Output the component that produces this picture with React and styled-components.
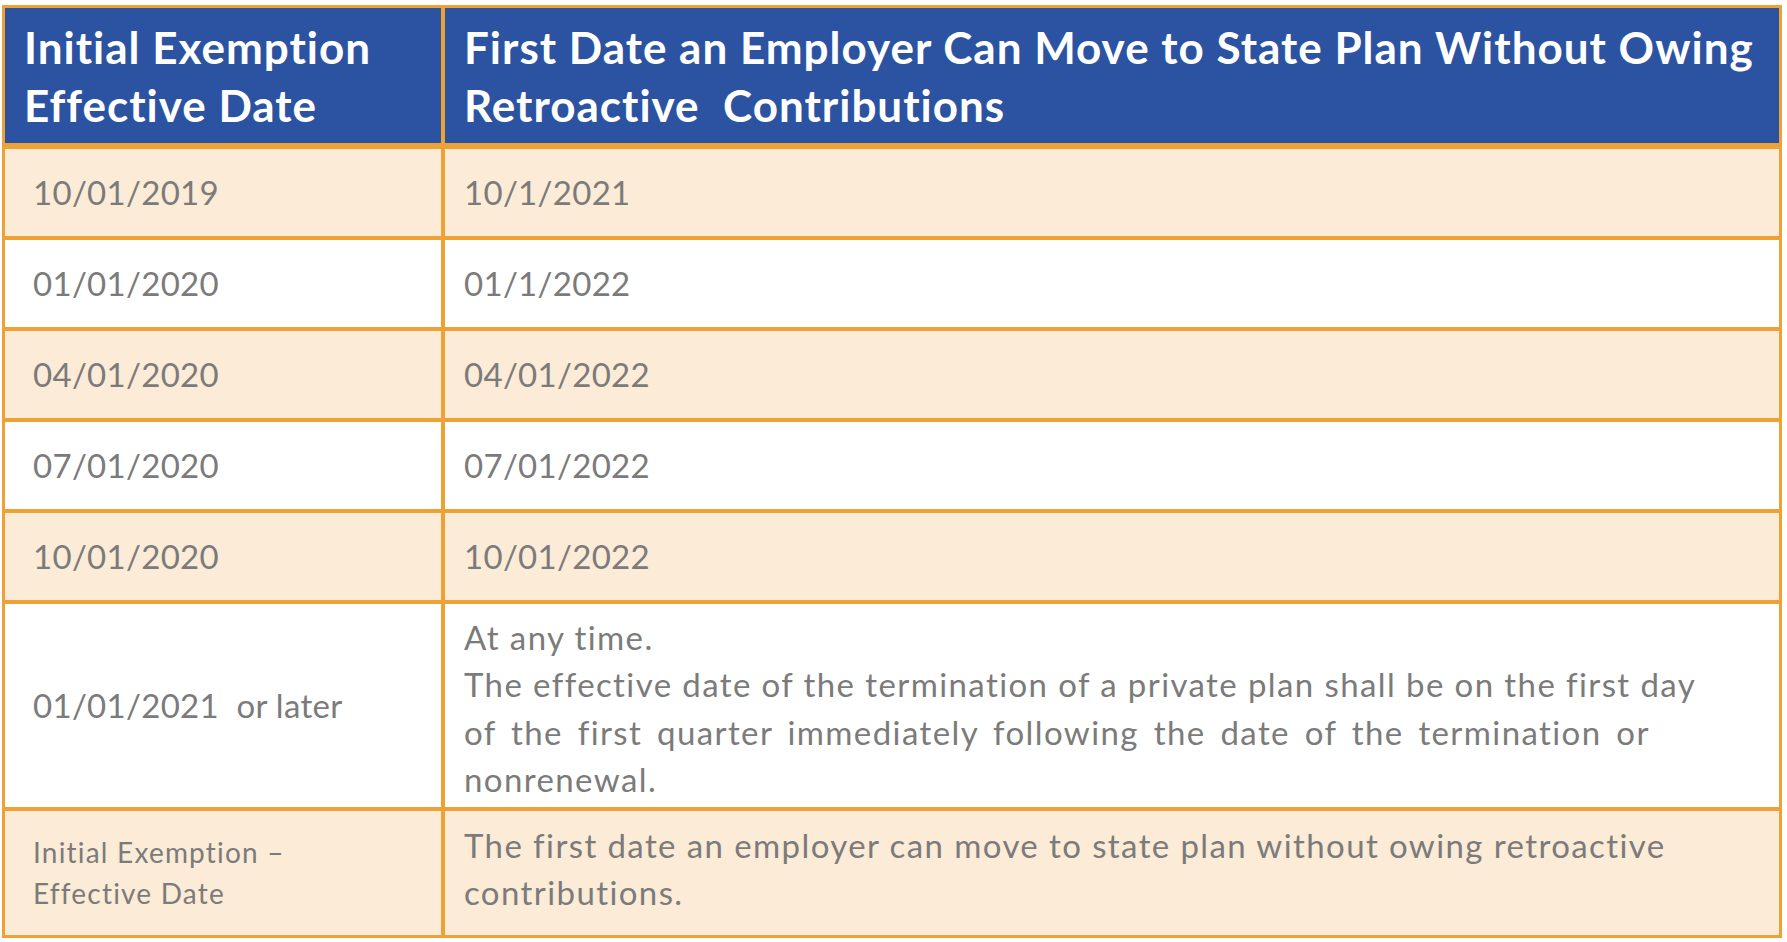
import React from "react";
import styled, { createGlobalStyle } from "styled-components";

const GlobalStyle = createGlobalStyle`
  html, body {
    margin: 0;
    padding: 0;
    background: #fff;
  }
  body {
    font-family: Lato, "Open Sans", sans-serif;
  }
`;

const Page = styled.div`
  padding: 5px 5px 0 2px;
`;

const Grid = styled.div`
  display: grid;
  width: 1780px;
  box-sizing: border-box;
  grid-template-columns: 436px 1fr;
  grid-template-rows: 137px 87px 87px 87px 87px 87px 203px 124px;
  gap: 4px;
  padding: 3px;
  background: #eea236;
`;

const HeadCell = styled.div`
  box-sizing: border-box;
  background: #2b53a1;
  border-bottom: 2px solid #eea236;
  color: #fff;
  font-weight: 700;
  font-size: 44px;
  letter-spacing: 1px;
  line-height: 58px;
  display: flex;
  align-items: center;
  padding: 0 ${(p) => (p.$first ? "19px" : "19px")};
`;

const Cell = styled.div`
  box-sizing: border-box;
  background: ${(p) => (p.$shaded ? "#fcebd6" : "#fff")};
  color: #7b7b7b;
  font-size: ${(p) => (p.$small ? "28px" : "33px")};
  letter-spacing: ${(p) => (p.$small ? "1.2px" : "0.3px")};
  line-height: ${(p) => (p.$small ? "41px" : "47.3px")};
  display: flex;
  align-items: ${(p) => (p.$top ? "flex-start" : "center")};
  padding: ${(p) => p.$pt || "0"} ${(p) => (p.$first ? "28px" : "19px")} 0;
`;

const Lines = styled.div`
  display: flex;
  flex-direction: column;
  letter-spacing: ${(p) => (p.$spaced ? "1.4px" : "inherit")};
`;

const Line = styled.span`
  word-spacing: ${(p) => (p.$wide ? "5px" : "normal")};
`;

const rows = [
  ["10/01/2019", "10/1/2021"],
  ["01/01/2020", "01/1/2022"],
  ["04/01/2020", "04/01/2022"],
  ["07/01/2020", "07/01/2022"],
  ["10/01/2020", "10/01/2022"],
];

export default function App() {
  return (
    <>
      <GlobalStyle />
      <Page>
        <Grid>
          <HeadCell $first>
            Initial Exemption
            <br />
            Effective Date
          </HeadCell>
          <HeadCell>
            First Date an Employer Can Move to State Plan Without Owing
            <br />
            Retroactive&nbsp; Contributions
          </HeadCell>

          {rows.map(([a, b], i) => (
            <React.Fragment key={a}>
              <Cell $first $shaded={i % 2 === 0}>{a}</Cell>
              <Cell $shaded={i % 2 === 0}>{b}</Cell>
            </React.Fragment>
          ))}

          <Cell $first>01/01/2021&nbsp; or later</Cell>
          <Cell $pt="6px">
            <Lines $spaced>
              <Line>At any time.</Line>
              <Line>
                The effective date of the termination of a private plan shall be on the first day
              </Line>
              <Line $wide>
                of the first quarter immediately following the date of the termination or
              </Line>
              <Line>nonrenewal.</Line>
            </Lines>
          </Cell>

          <Cell $first $shaded $small>
            <Lines>
              <Line>Initial Exemption –</Line>
              <Line>Effective Date</Line>
            </Lines>
          </Cell>
          <Cell $shaded $top $pt="11px">
            <Lines $spaced>
              <Line>The first date an employer can move to state plan without owing retroactive</Line>
              <Line>contributions.</Line>
            </Lines>
          </Cell>
        </Grid>
      </Page>
    </>
  );
}
